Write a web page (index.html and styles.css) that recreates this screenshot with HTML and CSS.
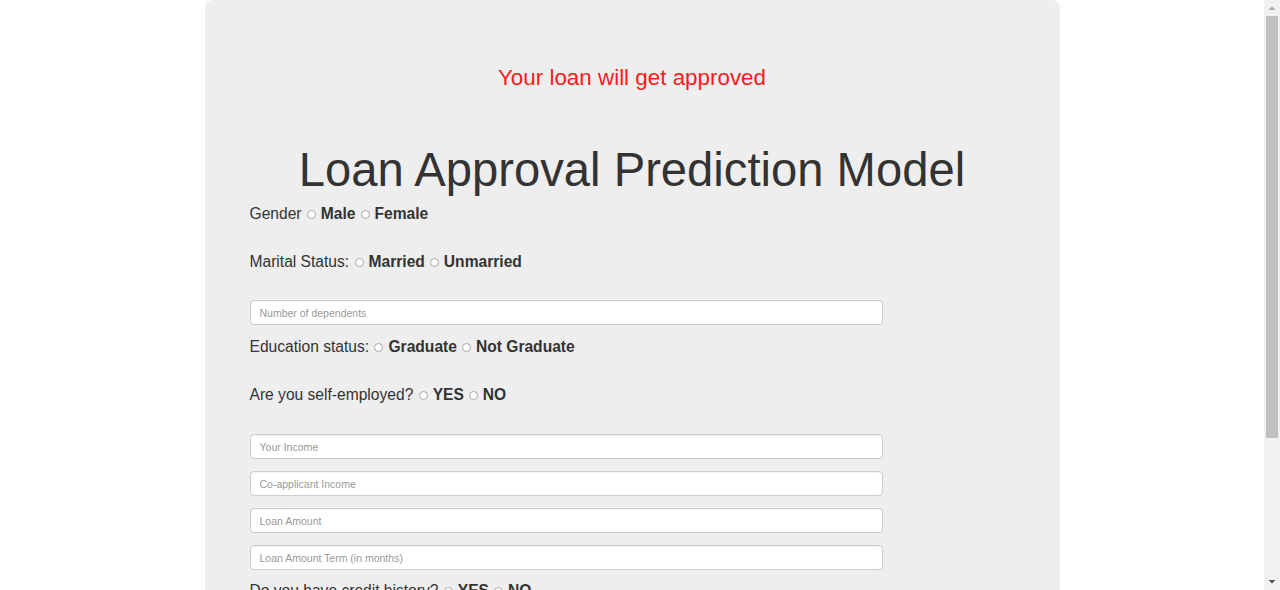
FILE: index.html
```html
<!DOCTYPE html>
<html lang="en">
<head>
<meta charset="utf-8">
<title>Loan Approval Prediction Model</title>
<link rel="stylesheet" href="styles.css">
</head>
<body>
<div class="card">
  <p class="result">Your loan will get approved</p>
  <h1 class="title">Loan Approval Prediction Model</h1>
  <form class="form">
    <div class="row">Gender <input type="radio" name="gender" class="radio"><b>Male</b><input type="radio" name="gender" class="radio"><b>Female</b></div>
    <div class="row">Marital Status: <input type="radio" name="married" class="radio"><b>Married</b><input type="radio" name="married" class="radio"><b>Unmarried</b></div>
    <input class="field field-first" type="text" placeholder="Number of dependents">
    <div class="row">Education status: <input type="radio" name="edu" class="radio"><b>Graduate</b><input type="radio" name="edu" class="radio"><b>Not Graduate</b></div>
    <div class="row">Are you self-employed? <input type="radio" name="self" class="radio"><b>YES</b><input type="radio" name="self" class="radio"><b>NO</b></div>
    <input class="field" type="text" placeholder="Your Income">
    <input class="field" type="text" placeholder="Co-applicant Income">
    <input class="field" type="text" placeholder="Loan Amount">
    <input class="field" type="text" placeholder="Loan Amount Term (in months)">
    <div class="row">Do you have credit history? <input type="radio" name="credit" class="radio"><b>YES</b><input type="radio" name="credit" class="radio"><b>NO</b></div>
    <div class="row">Property Area: <input type="radio" name="area" class="radio"><b>Urban</b><input type="radio" name="area" class="radio"><b>Semiurban</b><input type="radio" name="area" class="radio"><b>Rural</b></div>
    <button class="submit" type="button">Predict</button>
  </form>
</div>
<div class="scrollbar" aria-hidden="true">
  <div class="scroll-btn"><svg width="16" height="16" viewBox="0 0 16 16"><path d="M4.5 10 L8 6.5 L11.5 10 Z" fill="#a3a3a3"/></svg></div>
  <div class="scroll-track"><div class="scroll-thumb"></div></div>
  <div class="scroll-btn"><svg width="16" height="16" viewBox="0 0 16 16"><path d="M4.5 6 L8 9.5 L11.5 6 Z" fill="#505050"/></svg></div>
</div>
</body>
</html>
```
FILE: styles.css
```css
html, body {
  margin: 0;
  padding: 0;
  background: #ffffff;
}

body {
  font-family: "Liberation Sans", Arial, sans-serif;
  color: #333333;
  padding-right: 16px;
}

.card {
  width: 855px;
  margin: 0 auto;
  background: #eeeeee;
  border-radius: 8px 8px 0 0;
  padding: 65px 0 60px 45px;
  box-sizing: border-box;
}

.result {
  margin: 0 0 52px -45px;
  text-align: center;
  color: #ff1a1a;
  font-size: 22.4px;
  line-height: 26px;
}

.title {
  margin: 0 0 8px -45px;
  text-align: center;
  font-weight: normal;
  font-size: 47.2px;
  line-height: 54px;
  color: #333333;
}

.form {
  display: flex;
  flex-direction: column;
  align-items: flex-start;
}

.row {
  font-size: 15.6px;
  line-height: 18px;
  margin-bottom: 30px;
  white-space: nowrap;
}

.row b {
  font-weight: bold;
}

.radio {
  appearance: none;
  -webkit-appearance: none;
  width: 9px;
  height: 9px;
  margin: 0 5px 0 1px;
  border: 1px solid #a8a8a8;
  border-radius: 50%;
  background: #ffffff;
  box-sizing: border-box;
  vertical-align: 0;
}

.row b + .radio {
  margin-left: 5px;
}

.field {
  width: 633px;
  height: 25px;
  box-sizing: border-box;
  margin: 0 0 12px 0;
  padding: 0 9px;
  border: 1px solid #cccccc;
  border-radius: 4px;
  background: #ffffff;
  box-shadow: inset 0 1px 1px rgba(0, 0, 0, 0.05);
  font-family: "Liberation Sans", Arial, sans-serif;
  font-size: 10.5px;
  color: #555555;
}

.field-first {
  margin-top: -1px;
  margin-bottom: 13px;
}

.field::placeholder {
  color: #999999;
}

.submit {
  font-family: "Liberation Sans", Arial, sans-serif;
  font-size: 16px;
  padding: 8px 24px;
  border: 1px solid #cccccc;
  border-radius: 4px;
  background: #ffffff;
  color: #333333;
}

.scrollbar {
  position: fixed;
  top: 0;
  right: 0;
  bottom: 0;
  width: 16px;
  background: #f1f1f1;
  display: flex;
  flex-direction: column;
}

.scroll-btn {
  height: 16px;
  flex: none;
}

.scroll-btn svg {
  display: block;
}

.scroll-track {
  flex: 1;
  padding: 0 2px;
}

.scroll-thumb {
  height: 422px;
  background: #c1c1c1;
}
```
